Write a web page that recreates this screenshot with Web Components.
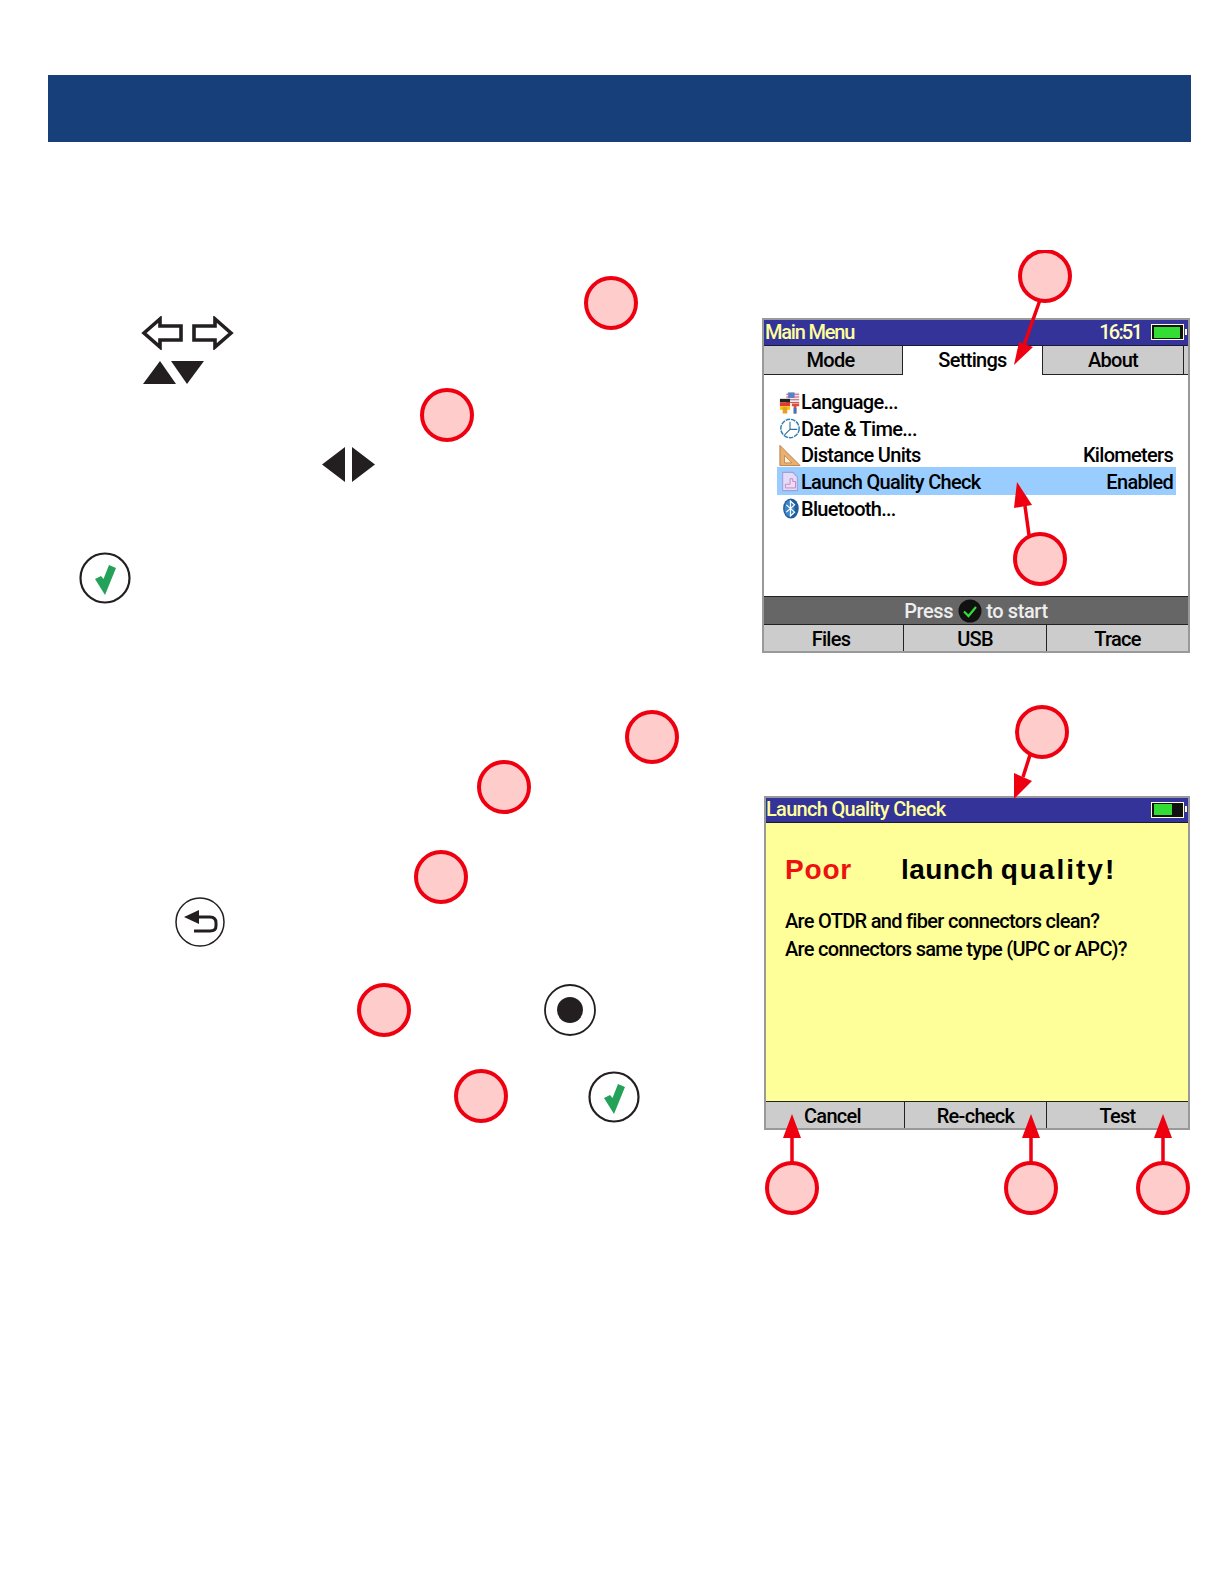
<!DOCTYPE html>
<html><head><meta charset="utf-8"><style>
html,body{margin:0;background:#fff}
body{width:1224px;height:1584px;overflow:hidden}
</style></head><body>
<manual-page>
  <doc-banner></doc-banner>
  <guide-section style="height:420px;margin-top:108px" screen-top="68" screen-left="0">
    <step-row slot="steps">
      <div style="margin:66px 0 0 93px;width:93px">
        <key-icon kind="arrows" style="width:93px;height:34px"></key-icon>
        <key-icon kind="updown" style="width:61px;height:23px;margin:11px 0 0 2px"></key-icon>
      </div>
      <call-out style="margin:26px 0 0 350px"></call-out>
    </step-row>
    <step-row slot="steps" style="margin:4px 0 0 372px"><call-out></call-out></step-row>
    <step-row slot="steps" style="margin:5px 0 0 274px"><key-icon kind="leftright" style="width:53px;height:35px"></key-icon></step-row>
    <step-row slot="steps" style="margin:70px 0 0 31px"><key-icon kind="check" style="width:52px;height:52px"></key-icon></step-row>
    <lcd-screen slot="screen" style="width:428px;height:335px">
      <lcd-title style="letter-spacing:-1.200px">Main Menu<span slot="clock">16:51</span></lcd-title>
      <lcd-tabs><lcd-tab style="width:139px;padding-right:5px">Mode</lcd-tab><lcd-tab active style="width:140px">Settings</lcd-tab><lcd-tab style="width:141px">About</lcd-tab></lcd-tabs>
      <menu-list>
        <menu-row icon="flag">Language...</menu-row>
        <menu-row icon="clock">Date &amp; Time...</menu-row>
        <menu-row icon="ruler">Distance Units<span slot="value">Kilometers</span></menu-row>
        <menu-row icon="doc" selected>Launch Quality Check<span slot="value">Enabled</span></menu-row>
        <menu-row icon="bt">Bluetooth...</menu-row>
      </menu-list>
      <lcd-status>Press <key-icon kind="okdark" style="width:24px;height:24px"></key-icon> to start</lcd-status>
      <lcd-keys style="height:27px"><lcd-key style="width:140px;padding-right:5px">Files</lcd-key><lcd-key style="width:143px">USB</lcd-key><lcd-key style="flex:1">Trace</lcd-key></lcd-keys>
    </lcd-screen>
    <svg slot="overlay" width="1143" height="420" viewBox="48 250 1143 420">
      <g fill="#ee0011" stroke="none">
        <path d="M1040 300L1024 345" stroke="#ee0011" stroke-width="3.5"/>
        <path d="M1014 365L1019 342L1033 347Z"/>
        <path d="M1029 535L1025 506" stroke="#ee0011" stroke-width="3.5"/>
        <path d="M1017 482L1014 508L1032 505Z"/>
      </g>
      <g fill="#ffcccc" stroke="#ee0011" stroke-width="4">
        <circle cx="1045" cy="276" r="25"/>
        <circle cx="1040" cy="559" r="25"/>
      </g>
    </svg>
  </guide-section>

  <guide-section style="height:530px;margin-top:30px" screen-top="96" screen-left="2">
    <step-row slot="steps">
      <call-out style="margin:60px 0 0 429px"></call-out>
      <call-out style="margin:10px 0 0 94px"></call-out>
    </step-row>
    <step-row slot="steps">
      <key-icon kind="back" style="width:50px;height:50px;margin:83px 0 0 127px"></key-icon>
      <call-out style="margin:36px 0 0 189px"></call-out>
    </step-row>
    <step-row slot="steps" style="margin:36px 0 0 309px;align-items:center"><call-out></call-out><key-icon kind="record" style="width:52px;height:52px;margin-left:133px"></key-icon></step-row>
    <step-row slot="steps" style="margin:32px 0 0 406px;align-items:center"><call-out></call-out><key-icon kind="check" style="width:52px;height:52px;margin:2px 0 0 80px"></key-icon></step-row>
    <lcd-screen slot="screen" style="width:426px;height:334px">
      <lcd-title low style="height:24px;padding-left:0">Launch Quality Check</lcd-title>
      <lcd-dialog>
        <span slot="head1">Poor</span><span slot="head2">launch</span><span slot="head3">quality!</span>
        <p>Are OTDR and fiber connectors clean?</p>
        <p>Are connectors same type (UPC or APC)?</p>
      </lcd-dialog>
      <lcd-keys style="height:27px"><lcd-key style="width:139px;padding-right:5px">Cancel</lcd-key><lcd-key style="width:142px">Re-check</lcd-key><lcd-key style="flex:1">Test</lcd-key></lcd-keys>
    </lcd-screen>
    <svg slot="overlay" width="1143" height="530" viewBox="48 700 1143 530">
      <g fill="#ee0011" stroke="none">
        <path d="M1030 755L1023 777" stroke="#ee0011" stroke-width="3.5"/>
        <path d="M1014 799L1014 773L1032 781Z"/>
        <path d="M792 1163V1136M1031 1163V1136M1163 1163V1136" stroke="#ee0011" stroke-width="3.5"/>
        <path d="M792 1114L783 1138H801Z"/><path d="M1031 1114L1022 1138H1040Z"/><path d="M1163 1114L1154 1138H1172Z"/>
      </g>
      <g fill="#ffcccc" stroke="#ee0011" stroke-width="4">
        <circle cx="1042" cy="732" r="25"/>
        <circle cx="792" cy="1188" r="25"/>
        <circle cx="1031" cy="1188" r="25"/>
        <circle cx="1163" cy="1188" r="25"/>
      </g>
    </svg>
  </guide-section>
</manual-page>

<script>
const LCD_FONT='Roboto,"Liberation Sans",sans-serif';
function def(name,css,html,extra){
  customElements.define(name,class extends HTMLElement{
    constructor(){super();const r=this.attachShadow({mode:'open'});
      r.innerHTML='<style>'+css+'</style>'+(typeof html==='function'?html(this):html);}
    connectedCallback(){
      if(typeof extra==='function')extra(this);
    }
  });
}
def('manual-page',':host{display:block;padding:75px 33px 0 48px}','<slot></slot>');
def('doc-banner',':host{display:block;height:67px;background:#173f7a}','');
def('guide-section',`:host{display:block;position:relative}
 .grid{display:grid;grid-template-columns:714px 1fr;height:100%}
 .screen{display:block}
 ::slotted(svg){position:absolute;left:0;top:0;pointer-events:none}`,
 `<div class="grid"><div><slot name="steps"></slot></div><div class="screen" id="s"><slot name="screen"></slot></div></div><slot name="overlay"></slot>`,
 el=>{const s=el.shadowRoot.getElementById('s');s.style.paddingTop=el.getAttribute('screen-top')+'px';s.style.paddingLeft=el.getAttribute('screen-left')+'px';});
def('step-row',':host{display:flex;align-items:flex-start}','<slot></slot>');
def('call-out',':host{display:block;flex:none;width:54px;height:54px;box-sizing:border-box;border-radius:50%;background:#ffcccc;border:4px solid #ee0011}','');

const ICONS={
 arrows:`<svg viewBox="0 0 93 34"><g fill="#fff" stroke="#231f20" stroke-width="3.600"><path d="M3 17L19 3V10H40V24H19V31Z"/><path d="M90 17L74 3V10H53V24H74V31Z"/></g></svg>`,
 updown:`<svg viewBox="0 0 61 23"><g fill="#231f20"><path d="M0 23L17 0L33 23Z"/><path d="M28 0H61L44 23Z"/></g></svg>`,
 leftright:`<svg viewBox="0 0 53 35"><g fill="#231f20"><path d="M0 17.500L23 0V35Z"/><path d="M30 0L53 17.500L30 35Z"/></g></svg>`,
 check:`<svg viewBox="0 0 52 52"><circle cx="26" cy="26" r="24.500" fill="#fff" stroke="#231f20" stroke-width="2.200"/><path d="M16 27L22 24L24.500 27L30 13L37 16L26 43Z" fill="#25a25a"/></svg>`,
 back:`<svg viewBox="0 0 50 50"><circle cx="25" cy="25" r="24" fill="#fff" stroke="#231f20" stroke-width="1.500"/><path d="M9 20L24 13V27Z" fill="#231f20"/><path d="M22 20H35Q41 20 41 26V29Q41 34 35 34H19" fill="none" stroke="#231f20" stroke-width="3"/></svg>`,
 record:`<svg viewBox="0 0 52 52"><circle cx="26" cy="26" r="25" fill="#fff" stroke="#231f20" stroke-width="1.800"/><circle cx="26" cy="26" r="13" fill="#231f20"/></svg>`,
 okdark:`<svg viewBox="0 0 24 24"><circle cx="12" cy="12" r="11.500" fill="#111"/><path d="M6 12.500L10.500 17L18 8" fill="none" stroke="#33dd33" stroke-width="2.200"/></svg>`,
 flag:`<svg viewBox="0 0 24 24"><rect x="8" y="1" width="14" height="12" fill="#e8eef8"/><path d="M8 3h14M8 6h14M8 9h14M8 12h14" stroke="#d9534f" stroke-width="1.300"/><rect x="10" y="1" width="7" height="6" fill="#5b7fc9"/><rect x="1" y="8" width="11" height="4" fill="#222"/><rect x="1" y="12" width="11" height="4" fill="#e03b2c"/><rect x="1" y="16" width="11" height="4" fill="#f5c518"/><path d="M4 17h5v7H4z" fill="#e8a020"/><path d="M14 13h8v3h-3v8h-3v-8h-2z" fill="#d94f3d"/><rect x="16" y="18" width="3" height="6" fill="#3c78c8"/></svg>`,
 clock:`<svg viewBox="0 0 24 24"><circle cx="12" cy="12" r="10" fill="#fff" stroke="#2f7fb5" stroke-width="1.600" stroke-dasharray="5 1"/><path d="M12 4.500V13H20M12 13L6 19" fill="none" stroke="#2f6f9a" stroke-width="1.200"/></svg>`,
 ruler:`<svg viewBox="0 0 24 24"><path d="M1 1L23 23H1Z" fill="#e9b072" stroke="#b57a3e" stroke-width="1"/><path d="M6 12L14 20H6Z" fill="#fff3e0" stroke="#b57a3e" stroke-width=".8"/></svg>`,
 doc:`<svg viewBox="0 0 24 24"><path d="M4 2H15L20 7V22H4Z" fill="#e4dcf7" stroke="#9fa0d8" stroke-width="1.200"/><path d="M7 15H12V9H15V12H18V19H7Z" fill="#f6d9ef" stroke="#b48ac8" stroke-width="1"/></svg>`,
 bt:`<svg viewBox="0 0 24 24"><ellipse cx="13" cy="12" rx="8.500" ry="11" fill="#1f5c99"/><ellipse cx="11.500" cy="12" rx="5.500" ry="9" fill="#3f86c6"/><path d="M8 8L17 16L12.500 20V4L17 8L8 16" fill="none" stroke="#fff" stroke-width="1.300"/></svg>`
};
def('key-icon',':host{display:block;flex:none}svg{display:block;width:100%;height:100%}',el=>ICONS[el.getAttribute('kind')]||'');

const lcdText=`font-family:${LCD_FONT};font-weight:500;font-size:20px;letter-spacing:-.7px;color:#000;line-height:1;`;
def('lcd-screen',`:host{display:flex;flex-direction:column;box-sizing:border-box;border:2px solid #999;background:#fff;overflow:hidden;${lcdText}}`,'<slot></slot>');
def('lcd-title',`:host{display:flex;flex:none;align-items:center;height:25px;box-sizing:content-box;background:#333399;border-bottom:1.500px solid #1a1a33;color:#ffff99;padding-left:1px;font-size:20px}
 .txt{padding-bottom:2px;display:block}
 .sp{flex:1}.clock{margin-right:10px;letter-spacing:-1.800px;padding-bottom:2px;color:#ffffbb}
 .bat{position:relative;flex:none;width:33px;height:16px;border:1.500px solid #ffffcc;background:#111;margin:0 4px 1px 0;box-sizing:border-box}
 .bat i{position:absolute;left:1.500px;top:1.500px;bottom:1.500px;background:#33dd33}
 .bat b{position:absolute;right:-4px;top:3.500px;width:2.500px;height:6px;background:#ffffcc}`,
 el=>`<span class="txt"><slot></slot></span><span class="sp"></span><span class="clock"><slot name="clock"></slot></span><span class="bat"><i style="width:${el.hasAttribute('low')?'60%':'86%'}"></i><b></b></span>`);
def('lcd-tabs',`:host{display:flex;flex:none;height:28px;background:#ccc;border-bottom:1.500px solid #222;box-sizing:content-box}`,'<slot></slot>');
def('lcd-tab',`:host{display:flex;align-items:center;justify-content:center;box-sizing:border-box;border-right:1.500px solid #222;background:#ccc}
 :host([active]){background:#fff;margin-bottom:-1.500px;padding-bottom:2px}`,'<slot></slot>');
def('menu-list',`:host{display:block;flex:1;background:#fff;padding:14px 12px 0 13px}`,'<slot></slot>');
def('menu-row',`:host{display:flex;align-items:center;height:26.600px;padding:0 3px 0 2px}
 :host([selected]){background:#99ccff;height:28.400px;margin:-1.800px 0 0;padding-top:1px;box-sizing:border-box}
 svg{display:block;width:22px;height:23px}
 .ic{width:22px;flex:none;display:block}
 .t{flex:1}`,
 el=>`<span class="ic">${ICONS[el.getAttribute('icon')]}</span><span class="t"><slot></slot></span><slot name="value"></slot>`);
def('lcd-status',`:host{display:flex;flex:none;align-items:center;justify-content:center;height:28px;box-sizing:border-box;background:#666;border-top:1.500px solid #222;color:#eee;white-space:pre;letter-spacing:-.4px}`,'<slot></slot>');
def('lcd-keys',`:host{display:flex;flex:none;box-sizing:border-box;background:#ccc;border-top:1.500px solid #222;padding-top:1px}`,'<slot></slot>');
def('lcd-key',`:host{display:flex;align-items:center;justify-content:center;box-sizing:border-box;border-right:1.500px solid #222;margin-top:-1px;padding-top:2px}:host(:last-child){border-right:0}`,'<slot></slot>');
def('lcd-dialog',`:host{display:block;flex:1;background:#ffff99;padding:29px 0 0 19px}
 .head{display:flex;align-items:baseline;font:700 28px/36px "Liberation Sans",sans-serif;height:36px}
 .poor{color:#ee1111;width:116px;letter-spacing:.8px}
 .l{margin-right:7px;letter-spacing:.4px}
 .q{letter-spacing:2px}
 ::slotted(p){margin:0;height:28.300px;line-height:28.300px}
 .body{margin-top:19px}`,
 `<div class="head"><span class="poor"><slot name="head1"></slot></span><span class="l"><slot name="head2"></slot></span><span class="q"><slot name="head3"></slot></span></div><div class="body"><slot></slot></div>`);
</script>
</body></html>
